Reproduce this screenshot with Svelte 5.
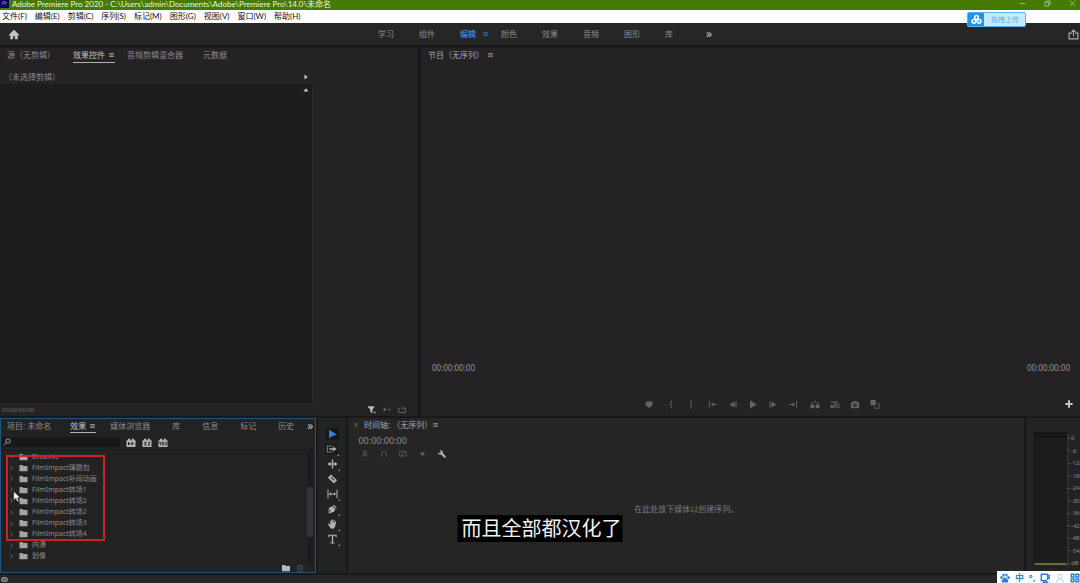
<script>
  const menus = ['文件(F)', '编辑(E)', '剪辑(C)', '序列(S)', '标记(M)', '图形(G)', '视图(V)', '窗口(W)', '帮助(H)'];
  const workspaces = ['学习', '组件', '编辑', '颜色', '效果', '音频', '图形', '库'];
  const sourceTabs = ['源（无剪辑）', '效果控件', '音频剪辑混合器', '元数据'];
  const effectTabs = ['项目: 未命名', '效果', '媒体浏览器', '库', '信息', '标记', '历史'];
  const folders = [
    'Dissolve',
    'FilmImpact弹跳包',
    'FilmImpact补间动画',
    'FilmImpact转场1',
    'FilmImpact转场2',
    'FilmImpact转场2',
    'FilmImpact转场3',
    'FilmImpact转场4',
    '内滑',
    '划像'
  ];
  const tools = ['select', 'track', 'ripple', 'razor', 'slip', 'pen', 'hand', 'type'];
  const transport = [['marker'], ['in', 'out'], ['goin', 'stepback', 'play', 'stepfwd', 'goout'], ['lift', 'extract', 'camera', 'compare']];
  const levels = ['0', '-6', '-12', '-18', '-24', '-30', '-36', '-42', '-48', '-54', 'dB'];
  let tool = $state('select');
  let query = $state('');
</script>

{#snippet icon(name)}
  <svg class="icon" viewBox="0 0 12 12" aria-hidden="true">
    {#if name === 'menu'}
      <path class="line" d="M2 3.5h8M2 6h8M2 8.5h8" />
    {:else if name === 'home'}
      <path d="M6 .8 0.4 6.200v.8H2V11.300h3V8h2v3.300h3V7h1.600v-.8z" />
    {:else if name === 'share'}
      <path class="line" d="M4 4.500H1.200v6.300h9.600V4.500H8M6 8V1.200M3.800 3.300 6 1.100l2.200 2.200" />
    {:else if name === 'right'}
      <path d="M3 .8 9.500 6 3 11.200z" />
    {:else if name === 'up'}
      <path d="M.8 9 6 2.500 11.200 9z" />
    {:else if name === 'chevron'}
      <path class="line" d="m4 2.500 4 3.500-4 3.500" />
    {:else if name === 'folder'}
      <path d="M0 1.500h4.500L5.700 3H12v8H0z" />
    {:else if name === 'search'}
      <circle class="line" cx="7.500" cy="4.500" r="3.300" /><path class="line" d="M5 7 1 11" />
    {:else if name === 'trash'}
      <path class="line" d="M1.500 3h9M4.500 3V1.500h3V3M2.500 3v8h7V3M5 5v4M7 5v4" />
    {:else if name === 'filter'}
      <path d="M0 1h9.500v1.800L6.700 6v5.500L3.500 9.800V6L0 2.800zM9 9.500h2.200v2.200H9z" />
    {:else if name === 'skip'}
      <path d="m1 3 4 3-4 3zM5.500 5.500H9v1H5.500zM10 3h1v6h-1z" />
    {:else if name === 'loop'}
      <path class="line" d="M3 4H1v6.500h10V4H8M5.500 2 8 4 5.500 6" />
    {:else if name === 'select'}
      <path d="M2 .5v11l3.400-2.800L11 7z" />
    {:else if name === 'track'}
      <path class="dash" d="M1 2.500h6M1 9.500h6M1 2.500v7" /><path d="M3.500 5H8V3l4 3-4 3V7H3.500z" />
    {:else if name === 'ripple'}
      <path d="M5.200 .5h1.600v11H5.200zM0 6l3.300-2.800v2H5v1.600H3.300v2zM12 6 8.700 3.200v2H7v1.600h1.700v2z" />
    {:else if name === 'razor'}
      <path fill-rule="evenodd" d="M4.200 .5 11.500 7.500 7.800 11.500 .5 4.500zM3.800 4.300l4 3.900.8-.9-4-3.900z" />
    {:else if name === 'slip'}
      <path d="M0 1h1.200v10H0zM10.800 1H12v10h-1.200zM1.700 6l2.600-2v1.400h3.400V4l2.600 2-2.600 2V6.600H4.300V8z" />
    {:else if name === 'pen'}
      <path d="m7.500.8 3.700 3.700-1.100 1-3.600-3.600zM5.800 2.600l3.600 3.600-1.600 3L1.500 11.300 1 10.800l3.200-3.400-.7-.7L.5 10l1.900-5.800z" />
    {:else if name === 'hand'}
      <path d="M3.300 7V2.200c0-.9 1.200-.9 1.300 0L4.800 5l.3-4c.1-.9 1.300-.9 1.300 0l.2 4 .7-3.600c.2-.8 1.300-.6 1.200.2L8.200 5.500l1-2.300c.4-.7 1.400-.3 1.200.5L9.300 8.500C8.800 10.500 7.800 11.700 6 11.700c-2 0-2.700-1-3.500-2.500L.6 6.500c-.4-.8.5-1.300 1.100-.8z" />
    {:else if name === 'type'}
      <path d="M1 .8h10v3h-1.200l-.4-1.600H6.800v7.900l1.700.3v.9h-5v-.9l1.700-.3V2.200H2.600l-.4 1.600H1z" />
    {:else if name === 'wrench'}
      <path d="M0 3.300 2.200 5l1.900-.7L4 2.500 2.500.6C5.500-.2 7.700 2 7.100 4.600l4.300 4.600c1 1.500-.8 3.200-2.300 2L4.800 6.900C2.300 7.700-.3 6 0 3.300z" />
    {:else if name === 'nest'}
      <path class="line" d="M6 1v10M2 4l8 5M10 4 2 9M3 2h6" />
    {:else if name === 'magnet'}
      <path class="line" d="M2.500 10.500V5.500a3.500 3.500 0 0 1 7 0v5M2 8.500h2M8 8.500h2" />
    {:else if name === 'link'}
      <path class="line" d="M1 2h10v7H1zM2 10 10 1M3 4l5 5" />
    {:else if name === 'marker'}
      <path d="M1.500 2h9v5L6 10.500 1.500 7z" />
    {:else if name === 'in'}
      <path class="line" d="M7.500 1.500H6v9h1.500" />
    {:else if name === 'out'}
      <path class="line" d="M4.500 1.500H6v9H4.500" />
    {:else if name === 'goin'}
      <path d="M.5 1h1.200v10H.5zM3 6l3.500-3v2.300H11v1.400H6.500V9z" />
    {:else if name === 'goout'}
      <path d="M10.300 1h1.200v10h-1.200zM9 6 5.500 3v2.300H1v1.400h4.500V9z" />
    {:else if name === 'stepback'}
      <path d="M8 2v8L1.500 6zM9.300 2h1.400v8H9.300z" />
    {:else if name === 'stepfwd'}
      <path d="M4 2v8l6.500-4zM1.300 2h1.400v8H1.300z" />
    {:else if name === 'play'}
      <path d="M2 .8 11 6l-9 5.200z" />
    {:else if name === 'lift'}
      <path d="M0 6h5v5H0zM7 6h5v5H7zM1.500 2.500h2v2h-2zM5 1h2v2H5zM8.500 2.500h2v2h-2zM5.500 7h1v1.500h-1z" />
    {:else if name === 'extract'}
      <path d="M0 6.500h4V11H0zM1 2h9v1.500H1zM5 4h2v6H5z" /><path class="line" d="M8.500 5.500h3V10h-3z" />
    {:else if name === 'camera'}
      <path fill-rule="evenodd" d="M.5 3h2.500L4.200 1.300h3.600L9 3h2.500v8H.5zM6 4.200a2.500 2.500 0 1 0 0 5 2.500 2.500 0 0 0 0-5zM6 5.600a1.100 1.100 0 1 1 0 2.200 1.100 1.100 0 0 1 0-2.200z" />
    {:else if name === 'compare'}
      <path d="M0 0h7v7H0z" /><path class="line" d="M8.500 5h3v6h-6V8.500" />
    {:else if name === 'plus'}
      <path d="M4.500 .5h3v4h4v3h-4v4h-3v-4h-4v-3h4z" />
    {:else if name === 'fast'}
      <path fill-rule="evenodd" d="M0 3h2V1h3v2h2V1h3v2h2v9H0zM2 5v5l3.500-2.500zM6.500 5v5L10 7.500z" />
    {:else if name === 'bits'}
      <path fill-rule="evenodd" d="M0 3h2V1h3v2h2V1h3v2h2v9H0zM2 5v1h2v1H2.500v1H4v1H2v1h3V5zM7 5v1h2v1L7 9v1h3V9H8.500L10 7.500V5z" />
    {:else if name === 'yuv'}
      <path fill-rule="evenodd" d="M0 3h2V1h3v2h2V1h3v2h2v9H0zM1.200 5v2l1 1v2h.9V8l1-1V5h-.9v1.700h-.9V5zM4.900 5v5h2.600V5h-.9v4h-.8V5zM8.300 5v3l1 2h.8l1-2V5h-.9v3l-.5 1-.5-1V5z" />
    {:else if name === 'cloud'}
      <circle class="bold" cx="6" cy="3.700" r="2" /><circle class="bold" cx="3.200" cy="8" r="2" /><circle class="bold" cx="8.800" cy="8" r="2" />
    {:else if name === 'paw'}
      <ellipse cx="1.800" cy="5.500" rx="1.500" ry="1.800" /><ellipse cx="4.300" cy="2.500" rx="1.400" ry="1.900" /><ellipse cx="7.700" cy="2.500" rx="1.400" ry="1.900" /><ellipse cx="10.200" cy="5.500" rx="1.500" ry="1.800" />
      <path d="M6 5.300c1.500 0 2.200 1.800 3.300 2.700 1.600 1.500.5 3.600-1.300 3.500-1.400-.2-2.600-.2-4 0-1.800.1-2.900-2-1.300-3.500C3.800 7.100 4.500 5.300 6 5.300z" />
    {:else if name === 'board'}
      <path class="bold" d="M9 8V1.500H1.500V9H8.500M9 3h2v3.500H9M3 11h7" />
    {:else if name === 'person'}
      <circle class="line" cx="6" cy="4" r="2.700" /><path class="line" d="M1.500 11.500C2 8.500 4 7 6 7s4 1.500 4.500 4.500" />
    {:else if name === 'grid'}
      <path class="bold" d="M1.500 1.500h3.300v3.300H1.500zM7.200 1.500h3.300v3.300H7.200zM1.500 7.200h3.300v3.300H1.500zM7.200 7.200h3.300v3.300H7.200z" />
    {:else if name === 'min'}
      <path class="line" d="M1 6h10" />
    {:else if name === 'restore'}
      <path class="line" d="M1.500 4h6.500v6.500H1.500zM4 4V1.500h6.500V8H8" />
    {:else if name === 'close'}
      <path class="line" d="m1.500 1 9 9.500M10.500 1l-9 9.500" />
    {/if}
  </svg>
{/snippet}

<div class="app">
  <header class="title">
    <span class="logo">Pr</span>
    <span class="name">Adobe Premiere Pro 2020 - C:\Users\admin\Documents\Adobe\Premiere Pro\14.0\未命名</span>
    <div class="window">
      <button aria-label="最小化">{@render icon('min')}</button>
      <button aria-label="还原">{@render icon('restore')}</button>
      <button aria-label="关闭">{@render icon('close')}</button>
    </div>
  </header>

  <nav class="menubar">
    {#each menus as m}<button>{m}</button>{/each}
  </nav>

  <nav class="workspaces">
    <button class="home" aria-label="主页">{@render icon('home')}</button>
    <div class="spaces">
      {#each workspaces as w}
        <button class:active={w === '编辑'}>{w}{#if w === '编辑'}{@render icon('menu')}{/if}</button>
      {/each}
      <button class="more">»</button>
    </div>
    <button class="share" aria-label="导出">{@render icon('share')}</button>
  </nav>

  <main>
    <div class="upper">
      <section class="panel source">
        <div class="tabs">
          {#each sourceTabs as t}
            <button class:active={t === '效果控件'}>{t}{#if t === '效果控件'}{@render icon('menu')}{/if}</button>
          {/each}
        </div>
        <div class="clip"><span>（未选择剪辑）</span>{@render icon('right')}</div>
        <div class="controls">{@render icon('up')}</div>
        <footer>
          <span>00:00:00:00</span>
          <div class="actions">
            <button class="lit" aria-label="过滤">{@render icon('filter')}</button>
            <button aria-label="播放">{@render icon('skip')}</button>
            <button aria-label="循环">{@render icon('loop')}</button>
          </div>
        </footer>
      </section>

      <section class="panel program">
        <div class="tabs">
          <button class="plain">节目（无序列）{@render icon('menu')}</button>
        </div>
        <div class="monitor"></div>
        <div class="times"><span>00:00:00:00</span><span>00:00:00:00</span></div>
        <div class="transport">
          <div class="groups">
            {#each transport as group}
              <div>{#each group as g}<button aria-label={g}>{@render icon(g)}</button>{/each}</div>
            {/each}
          </div>
          <button class="add" aria-label="添加">{@render icon('plus')}</button>
        </div>
      </section>
    </div>

    <div class="lower">
      <section class="panel effects">
        <div class="tabs">
          {#each effectTabs as t}
            <button class:active={t === '效果'}>{t}{#if t === '效果'}{@render icon('menu')}{/if}</button>
          {/each}
          <button class="more">»</button>
        </div>
        <div class="find">
          <label>{@render icon('search')}<input aria-label="搜索" bind:value={query} /></label>
          {#each ['fast', 'bits', 'yuv'] as b}<button class="badge" aria-label={b}>{@render icon(b)}</button>{/each}
        </div>
        <div class="tree">
          <ul>
            {#each folders as f}
              <li><button>{@render icon('chevron')}{@render icon('folder')}<span>{f}</span></button></li>
            {/each}
          </ul>
          <div class="track"><i></i></div>
          <div class="frame"></div>
          <svg class="cursor" viewBox="0 0 8 12" aria-hidden="true"><path d="M.5.500v9.300l2.200-2 1.600 3.700 1.600-.7-1.600-3.500h3z" /></svg>
        </div>
        <footer>
          <button class="lit" aria-label="新建文件夹">{@render icon('folder')}</button>
          <button aria-label="删除">{@render icon('trash')}</button>
        </footer>
      </section>

      <section class="panel tools">
        {#each tools as t}
          <button class={t} class:active={tool === t} aria-label={t} onclick={() => (tool = t)}>{@render icon(t)}</button>
        {/each}
      </section>

      <section class="panel timeline">
        <div class="tabs">
          <button class="plain"><b>×</b>时间轴: （无序列）{@render icon('menu')}</button>
        </div>
        <span class="code">00:00:00:00</span>
        <div class="options">
          <button aria-label="嵌套">{@render icon('nest')}</button>
          <button aria-label="对齐">{@render icon('magnet')}</button>
          <button aria-label="链接">{@render icon('link')}</button>
          <button class="small" aria-label="标记">{@render icon('marker')}</button>
          <button class="lit" aria-label="设置">{@render icon('wrench')}</button>
        </div>
        <p>在此处放下媒体以创建序列。</p>
      </section>

      <section class="panel meters">
        <div class="bar"></div>
        <ol>
          {#each levels as l}<li>{l}</li>{/each}
        </ol>
      </section>
    </div>
  </main>

  <div class="status"><span class="cc"></span></div>

  <button class="upload"><span>{@render icon('cloud')}</span>拖拽上传</button>
  <div class="subtitle">而且全部都汉化了</div>
  <div class="ime">
    {@render icon('paw')}<span>中</span><span>°,</span>{@render icon('board')}{@render icon('person')}{@render icon('grid')}
  </div>
</div>

<style>
  :global(body) { margin: 0; background: #181819; }
  .app {
    position: relative;
    display: flex;
    flex-direction: column;
    height: 100vh;
    overflow: hidden;
    font: 8px/12px 'Noto Sans', 'Noto Sans CJK SC', sans-serif;
    color: #8c8c8c;
    white-space: nowrap;
  }
  button {
    display: flex;
    align-items: center;
    padding: 0;
    border: 0;
    background: none;
    color: inherit;
    font: inherit;
    white-space: nowrap;
  }
  .icon { width: 8px; height: 8px; flex: none; fill: currentColor; display: block; }
  .line, .dash, .bold { fill: none; stroke: currentColor; stroke-width: 1.2; }
  .dash { stroke-dasharray: 1.5 1; }
  .bold { stroke-width: 1.7; }
  .lit { color: #b8b8b8; }

  .title { display: flex; flex: none; height: 10px; background: #457900; color: #eef5e6; }
  .logo { width: 9px; height: 8px; margin-right: 3px; background: #05005c; color: #a9a4ee; font-size: 5px; line-height: 7px; text-align: center; }
  .name { font-family: Lato, 'Noto Sans CJK SC', sans-serif; line-height: 8px; }
  .window { display: flex; gap: 18px; margin-left: auto; padding-right: 4px; align-self: flex-start; color: #c3d6ac; }
  .window .icon { width: 7px; height: 7px; }
  .menubar { display: flex; gap: 8px; flex: none; height: 13px; padding: 0 2px; background: #fff; color: #111; font-family: Lato, 'Noto Sans CJK SC', sans-serif; }
  .menubar button { height: 12px; }

  .workspaces { display: flex; align-items: center; flex: none; height: 22px; background: #262626; border-bottom: 3px solid #1a1a1a; }
  .home { width: 35%; padding-left: 8px; box-sizing: border-box; color: #c4c4c4; }
  .home .icon { width: 12px; height: 11px; }
  .share .icon { width: 11px; height: 11px; }
  .spaces { display: flex; }
  .spaces button { width: 41px; }
  .spaces .icon { width: 7px; margin-left: 6px; }
  .spaces .active { color: #2f80cc; font-weight: 700; }
  .more { color: #c4c4c4; font-size: 12px; }
  .share { margin-left: auto; padding-right: 1px; color: #b0b0b0; }

  main { display: flex; flex-direction: column; flex: 1; min-height: 0; gap: 2px; }
  .upper { display: flex; flex: 1; gap: 3px; min-height: 0; }
  .lower { display: flex; flex: none; gap: 2px; height: 155px; }
  .panel { display: flex; flex-direction: column; min-width: 0; background: #242225; }

  .tabs { display: flex; flex: none; height: 15px; }
  .tabs button { height: 15px; margin: 0 12px; flex: none; box-sizing: border-box; border-bottom: 1px solid transparent; }
  .tabs button:first-child { margin-left: 7px; }
  .tabs .icon { width: 7px; margin-left: 3px; }
  .tabs .active { margin: 0 0 0 6px; color: #c2c2c2; border-color: #b0b0b0; }
  .tabs .plain { color: #a8a8a8; }

  .source { width: 38.700%; }
  .source .tabs button:last-child { margin-left: 8px; }
  .clip { display: flex; align-items: flex-end; justify-content: space-between; width: 75%; height: 21px; padding: 0 4px 1px; box-sizing: border-box; }
  .clip .icon, .controls .icon { width: 6px; height: 6px; color: #c4c4c4; }
  .clip .icon { margin-bottom: 3px; }
  .controls { display: flex; justify-content: flex-end; flex: 1; width: 75%; padding: 3px 3px 0 0; box-sizing: border-box; background: #1e1c1e; border-right: 1px solid #2b292c; }
  .source footer { display: flex; align-items: center; justify-content: space-between; height: 13px; padding: 0 12px 0 2px; font-size: 6px; color: #707070; }
  .actions { display: flex; gap: 7px; }
  .actions .icon { height: 9px; }

  .program { flex: 1; }
  .monitor { flex: 1; }
  .times { display: flex; justify-content: space-between; padding: 0 10px 0 11px; color: #949494; }
  .transport { display: flex; align-items: center; justify-content: space-between; height: 42px; padding: 18px 7px 0 0; box-sizing: border-box; color: #646464; }
  .groups { display: flex; gap: 2px; margin-left: 33%; margin-right: auto; padding-left: 3px; }
  .groups div { display: flex; }
  .groups button { width: 20px; justify-content: center; }
  .groups .icon { width: 10px; height: 9px; }
  .add { color: #c4c4c4; }

  .effects { position: relative; width: 29.300%; box-sizing: border-box; border: 1px solid #24557c; background: #222223; }
  .effects .tabs button { height: 14px; }
  .effects .tabs button:not(.active):not(:first-child) { margin: 0 11px; }
  .effects .tabs .active { margin: 0 3px 0 7px; }
  .effects .tabs .more:not(.active):not(:first-child) { margin: 0 2px 0 auto; }
  .effects .tabs button:nth-last-child(2):not(.active):not(:first-child) { margin-right: 0; }
  .effects .tabs button:first-child { margin: 0 12px 0 6px; }
  .find { display: flex; align-items: center; gap: 6px; height: 16px; flex: none; }
  .find label { display: flex; align-items: center; width: 119px; height: 10px; padding-left: 2px; box-sizing: border-box; background: #18181a; color: #bcbcbc; }
  .find input { flex: 1; min-width: 0; height: 9px; padding: 0; border: 0; outline: 0; background: none; color: inherit; font: inherit; }
  .badge { color: #b4b4b4; }
  .badge .icon { width: 10px; height: 9px; }
  .tree { position: relative; display: flex; flex: 1; min-height: 0; border-top: 1px solid #1b1b1b; }
  ul { display: flex; flex-direction: column; flex: 1; margin: 0 0 1px; padding: 0; list-style: none; font-size: 7px; }
  .tree li { display: flex; flex: 1; min-height: 0; align-items: center; }
  .tree li button { gap: 4px; padding-left: 7px; height: 10px; }
  .tree .icon { width: 9px; color: #a4a4a4; }
  .tree .icon:first-child { width: 7px; height: 7px; color: #777; }
  .track { width: 6px; margin-right: 2px; background: #1c1b1d; }
  .track i { display: block; height: 50px; margin-top: 36px; border-radius: 2px; background: #363438; }
  .frame { position: absolute; left: 5px; top: 4px; width: 95px; height: 82px; border: 2px solid #cc2228; }
  .cursor { position: absolute; left: 12px; top: 40px; width: 8px; height: 11px; fill: #fff; stroke: #333; stroke-width: .5; }
  .effects footer { display: flex; align-items: center; justify-content: flex-end; gap: 6px; height: 9px; padding-right: 11px; color: #505050; }

  .tools { width: 28px; align-items: center; gap: 3px; padding-top: 10px; box-sizing: border-box; background: #222423; color: #b4b4b4; }
  .tools button { position: relative; justify-content: center; flex: none; width: 13px; height: 12px; }
  .tools .icon { width: 11px; height: 10px; }
  .tools .active { background: #171717; color: #2f86dd; }
  .tools button::after { content: ''; position: absolute; right: -1px; bottom: -1px; border: 1px solid transparent; border-right-color: #999; border-bottom-color: #999; }
  .tools .select::after, .tools .razor::after { display: none; }

  .timeline { flex: 1; background: #252525; }
  .timeline b { margin-right: 6px; color: #6c6c6c; font-weight: 400; }
  .timeline .tabs button:first-child { margin-left: 5px; }
  .timeline .plain .icon { margin-left: 0; }
  .code { padding: 2px 10px 0; font-size: 9px; color: #8c8c8c; }
  .options { display: flex; gap: 11px; padding: 0 13px; color: #5c5c5c; }
  .options button { height: 13px; }
  .options .small .icon { width: 5px; margin: 0 2px; }
  .timeline p { margin: 43px 0 0; text-align: center; color: #7c7c7c; }

  .meters { flex-direction: row; width: 54px; padding: 14px 0 8px 8px; box-sizing: border-box; }
  .bar { width: 33px; box-sizing: border-box; border: 1px solid #151516; border-top-width: 6px; border-bottom: 2px solid #68702c; background: #1d1c1e; }
  ol { display: flex; flex-direction: column; justify-content: space-between; margin: 2px 0 -2px; padding: 0; list-style: none; font-size: 6px; line-height: 8px; border-left: 1px dotted #4e4e4e; }
  ol li { display: flex; align-items: center; }
  ol li::before { content: ''; width: 2px; height: 1px; margin-right: 1px; background: #555; }

  .status { flex: none; height: 8px; margin-top: 2px; background: #262626; }
  .cc { display: block; width: 5px; height: 3px; margin: 2px 1px; border: 1px solid #999; border-radius: 4px; background: #666; }

  .upload { position: absolute; top: 12px; right: 54px; gap: 7px; width: 59px; height: 15px; border: 1px solid #59b2ed; border-radius: 2px; box-sizing: border-box; background: #c5eaff; color: #5fb4ee; font-size: 7px; }
  .upload span { display: flex; align-items: center; justify-content: center; width: 16px; height: 13px; background: #1897f5; color: #fff; }
  .upload .icon { width: 11px; height: 11px; }
  .subtitle { position: absolute; bottom: 41px; left: 50%; padding: 0 1px 0 4px; transform: translateX(-50%); background: #000; color: #f2f2f2; font-size: 20px; line-height: 27px; }
  .ime { position: absolute; right: 0; bottom: 0; display: flex; align-items: center; justify-content: space-between; width: 83px; height: 12px; padding: 2px 0 0 3px; box-sizing: border-box; background: #fff; color: #2e7fd8; font-size: 9px; font-weight: 700; line-height: 10px; }
  .ime .icon { width: 10px; height: 10px; }
  .ime .icon:nth-last-child(2) { color: #b9cfe8; }
</style>
